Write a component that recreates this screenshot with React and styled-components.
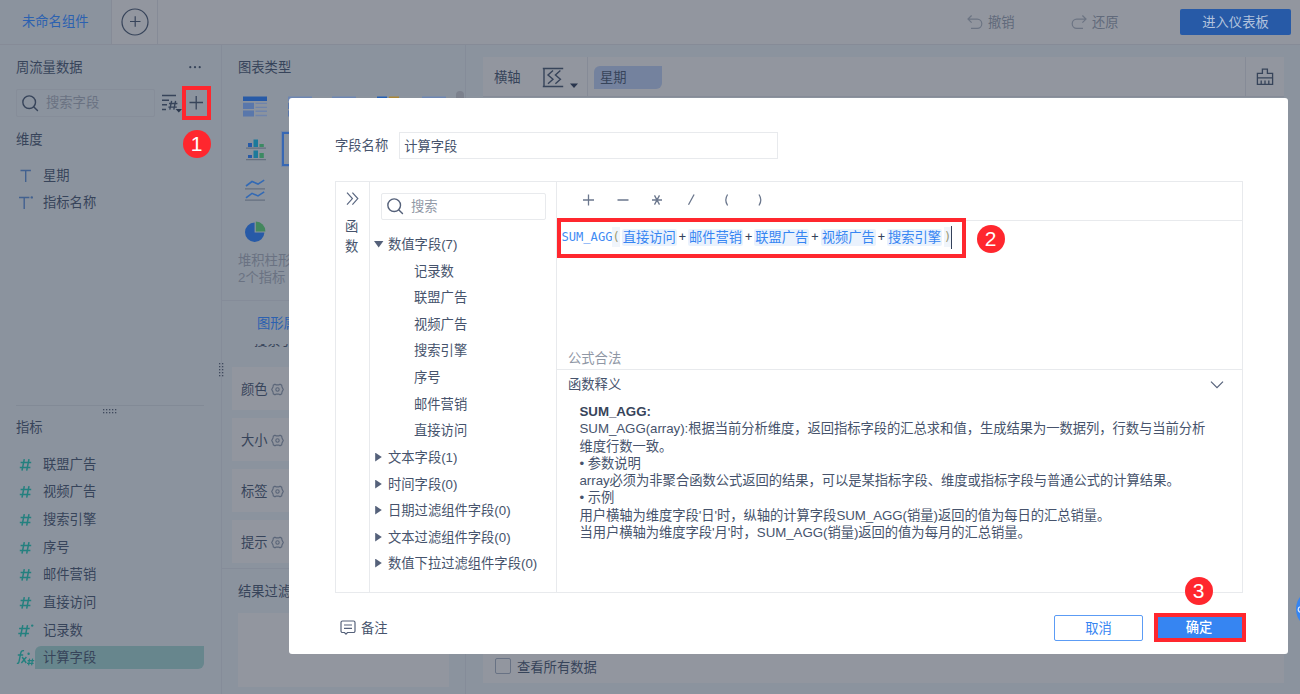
import React from "react";
import styled, { createGlobalStyle, css } from "styled-components";

const GlobalStyle = createGlobalStyle`
  * { box-sizing: border-box; }
  body {
    margin: 0;
    overflow: hidden;
    font-family: "Liberation Sans", "Noto Sans CJK SC", sans-serif;
    font-size: 13.3px;
    line-height: 20px;
    color: #37445a;
  }
  svg { display: block; flex: none; }
`;

const groups = ["文本字段(1)", "时间字段(0)", "日期过滤组件字段(0)", "文本过滤组件字段(0)", "数值下拉过滤组件字段(0)"];
const numberFields = ["记录数", "联盟广告", "视频广告", "搜索引擎", "序号", "邮件营销", "直接访问"];
const measures = ["联盟广告", "视频广告", "搜索引擎", "序号", "邮件营销", "直接访问"];
const formula = ["直接访问", "邮件营销", "联盟广告", "视频广告", "搜索引擎"];

// icons

const SearchIcon = ({ color }) => (
  <svg width="17" height="17" viewBox="0 0 18 18" fill="none" stroke={color} strokeWidth="1.5">
    <circle cx="7.6" cy="7.6" r="6.7" />
    <path d="M12.6 12.6l3.8 3.8" strokeLinecap="round" />
  </svg>
);

const HashIcon = ({ dot }) => (
  <svg width="16" height="16" viewBox="0 0 16 16" fill="none" stroke="#24807f" strokeWidth="1.5">
    <path d="M6.3 2.2L4 13.6M11 2.2L8.7 13.6M2.6 5.4h10.6M1.8 10.4h10.6" transform={dot ? "translate(-1.5 0)" : undefined} />
    {dot && <circle cx="14.2" cy="2.6" r="1.2" fill="#24807f" stroke="none" />}
  </svg>
);

const TextIcon = ({ dot }) => (
  <svg width="16" height="16" viewBox="0 0 16 16" fill="none" stroke="#42618f" strokeWidth="1.4">
    <path d="M2.5 2.5h10.400M7.700 2.500V14" transform={dot ? "translate(-1.5 0)" : undefined} />
    {dot && <circle cx="13.8" cy="2.4" r="1.2" fill="#42618f" stroke="none" />}
  </svg>
);

const FxIcon = () => (
  <svg width="19" height="18" viewBox="0 0 19 18" fill="none" stroke="#24807f" strokeWidth="1.4">
    <path d="M8 1.8C5.8 1.2 5 2.6 4.6 4.6L3 12.6C2.700 14 2 14.600 .9 14.300M1.800 6h5.400M6.200 8l4 6M10.400 8l-5 6" />
    <path d="M13.600 9.600l-1 6.800M16.600 9.600l-1 6.800M11.600 11.600h6.600M11 14.400h6.600" strokeWidth="1.200" />
    <circle cx="12.6" cy="4.800" r="1.200" fill="#24807f" stroke="none" />
  </svg>
);

const SortIcon = () => (
  <svg width="22" height="20" viewBox="0 0 22 20" fill="none" stroke="#37445a" strokeWidth="1.4">
    <path d="M1 2.500h14M1 7.200h7M1 11.800h5M1 16.500h4" />
    <path d="M10.600 7.900L8.800 16.700M14.600 7.900l-1.800 8.800M8 10.500h8.400M7.400 14.100h8.400" strokeWidth="1.4" />
    <path d="M14.600 16h6.400l-3.200 3.600z" fill="#2c384d" stroke="none" />
  </svg>
);

const HexIcon = () => (
  <svg width="13" height="13" viewBox="0 0 13 13" fill="none" stroke="#5a6578" strokeWidth="1.1">
    <path d="M4 1.2l1.1.7h2.8L9 1.2l1.7 1L11 4l1.3 2.5L11 9l-.3 1.8-1.7 1-1.1-.7H5.1l-1.1.7-1.7-1L2 9 .7 6.5 2 4l.3-1.8z" />
    <circle cx="6.5" cy="6.5" r="1.7" />
  </svg>
);

const TableChartIcon = ({ faded }) => (
  <svg width="24" height="21" viewBox="0 0 24 21">
    <path d="M0 .5h24v4.5H0z" fill={faded ? "#6d86b3" : "#275aa7"} />
    <path d="M0 6.8h11v6.2H0zM0 14.6h11v6H0z" fill="#5977ab" />
    <path d="M12.5 7.4h11.5M12.5 11.4h11.5M12.5 15.3h11.5M12.5 19.5h11.5" stroke="#6f84ab" strokeWidth="1.4" />
  </svg>
);

const MultiChartIcon = () => (
  <svg width="20" height="22" viewBox="0 0 20 22">
    <path d="M2 4h4v4H2zM2 16h4v3H2z" fill="#275aa7" />
    <path d="M7.500 .5h4.500V8H7.500zM7.500 11.5h4.500V19H7.500z" fill="#1c7a9b" />
    <path d="M13.500 5h4.300v3h-4.300zM13.500 14h4.300v5h-4.300z" fill="#3c8a63" />
    <path d="M0 9.2h20M0 20.6h20" stroke="#667080" strokeWidth="1.2" />
  </svg>
);

const LineChartIcon = () => (
  <svg width="20" height="22" viewBox="0 0 20 22" fill="none">
    <path d="M1 7l6-4.500 6 2.600 6.200-4M1 18.800l6-4.500 6 2.600 6.200-4" stroke="#336ab5" strokeWidth="1.600" />
    <path d="M0 9.800h20M0 21.200h20" stroke="#667080" strokeWidth="1.200" />
  </svg>
);

const PieChartIcon = () => (
  <svg width="22" height="22" viewBox="0 0 22 22">
    <path d="M9.600 1.600A9.700 9.700 0 1 0 19.400 11.600H9.600z" fill="#275aa7" />
    <path d="M10.800 .4A9.700 9.700 0 0 1 20.400 10.400h-9.600z" fill="#43875d" />
  </svg>
);

const BarChartIcon = () => (
  <svg width="24" height="21" viewBox="0 0 24 21">
    <path d="M0 .5h10v20H0z" fill="#235fb4" />
    <path d="M12 .5h10v20H12z" fill="#a98636" />
  </svg>
);

const DotGrid = ({ cols, rows }) => {
  const dots = [];
  for (let r = 0; r < rows; r++)
    for (let c = 0; c < cols; c++)
      dots.push(<rect key={`${r}-${c}`} x={c * 3} y={r * 3} width="1.3" height="1.3" />);
  return (
    <svg width={cols * 3} height={rows * 3} fill="#3f4a5d">
      {dots}
    </svg>
  );
};

const Group = ({ title, open }) => (
  <TreeRow>
    <svg width="10" height="10" viewBox="0 0 10 10" fill="#55617a">
      {open ? <path d="M0 1h9.400L4.700 7.600z" /> : <path d="M1.200 -.4l6.600 4.500-6.600 4.500z" />}
    </svg>
    {title}
  </TreeRow>
);

const App = () => (
  <Page>
    <GlobalStyle />
    <TopBar>
      <Tab>未命名组件</Tab>
      <AddTab>
        <svg width="28" height="28" viewBox="0 0 28 28" fill="none" stroke="#37445a" strokeWidth="1.2">
          <circle cx="14" cy="14" r="13" />
          <path d="M9 13.5h10.5M14.2 8.2v10.5" />
        </svg>
      </AddTab>
      <Actions>
        <Action>
          <svg width="16" height="16" viewBox="0 0 16 16" fill="none" stroke="#6c7483" strokeWidth="1.2">
            <path d="M4.6 .5L1 4.1l3.6 3.6M1.2 4.1h9a4.6 4.6 0 0 1 0 9.200H4" />
          </svg>
          撤销
        </Action>
        <Action>
          <svg width="16" height="16" viewBox="0 0 16 16" fill="none" stroke="#6c7483" strokeWidth="1.2">
            <path d="M11.4 .5L15 4.100l-3.600 3.600M14.800 4.100h-9a4.600 4.600 0 0 0 0 9.200H12" />
          </svg>
          还原
        </Action>
        <Enter>进入仪表板</Enter>
      </Actions>
    </TopBar>

    <Columns>
      <FieldPanel>
        <PanelHead>
          周流量数据
          <svg width="12" height="4" viewBox="0 0 12 4" fill="#37445a">
            <circle cx="1.3" cy="1.200" r="1.1" />
            <circle cx="6" cy="1.200" r="1.1" />
            <circle cx="10.7" cy="1.200" r="1.1" />
          </svg>
        </PanelHead>
        <SearchRow>
          <FieldSearch>
            <SearchIcon color="#37445a" />
            搜索字段
          </FieldSearch>
          <SortIcon />
          <AddField>
            <svg width="15" height="15" viewBox="0 0 15 15" stroke="#37445a" strokeWidth="1.3">
              <path d="M.5 6.500h13.500M7.200 0v13.500" />
            </svg>
            <Step $left="-3.5px" $top="39.5px">1</Step>
          </AddField>
        </SearchRow>
        <Dimensions>
          <GroupName>维度</GroupName>
          <DimList>
            <Field $h="26.5px"><TextIcon />星期</Field>
            <Field $h="26.5px"><TextIcon dot />指标名称</Field>
          </DimList>
        </Dimensions>
        <Measures>
          <Grip><DotGrid cols={5} rows={2} /></Grip>
          <GroupName>指标</GroupName>
          <MeasureList>
            {measures.map((m) => (
              <Field key={m} $h="27.65px"><HashIcon />{m}</Field>
            ))}
            <Field $h="27.65px"><HashIcon dot />记录数</Field>
            <CalcField><FxIcon /><CalcName>计算字段</CalcName></CalcField>
          </MeasureList>
        </Measures>
      </FieldPanel>

      <ChartPanel>
        <SideGrip><DotGrid cols={2} rows={5} /></SideGrip>
        <ChartTypes>
          <ChartTitle>图表类型</ChartTitle>
          <ChartGrid>
            <TableChartIcon /><TableChartIcon faded /><TableChartIcon faded /><BarChartIcon /><TableChartIcon faded />
            <MultiChartIcon /><Selected />
          </ChartGrid>
          <Thumb />
          <IconLine $top="19px"><LineChartIcon /></IconLine>
          <IconLine $top="20px"><PieChartIcon /></IconLine>
          <Hint>堆积柱形图<br />2个指标</Hint>
        </ChartTypes>
        <AttrTab>图形属性</AttrTab>
        <Clipped><span>搜索引擎</span></Clipped>
        <Attrs>
          {["颜色", "大小", "标签", "提示"].map((a) => (
            <Attr key={a}>{a}<HexIcon /></Attr>
          ))}
        </Attrs>
        <FilterBox>
          结果过滤器
          <FilterDrop />
        </FilterBox>
      </ChartPanel>

      <Main>
        <AxisRow>
          <AxisName>
            横轴
            <svg width="37" height="22" viewBox="0 0 37 22" fill="none" stroke="#37445a" strokeWidth="1.4">
              <path d="M.8 1.500h20.400M.8 19.500h20.400M2 1.500v18M11 3.500L6 8l5 4.200-5 4.600M18.400 3.500l-5 4.500 5 4.200-5 4.600" />
              <path d="M28 16.500h8l-4 4.400z" fill="#29354d" stroke="none" />
            </svg>
          </AxisName>
          <AxisFields><AxisChip>星期</AxisChip></AxisFields>
          <Clean>
            <svg width="18" height="18" viewBox="0 0 18 18" fill="none" stroke="#37445a" strokeWidth="1.3">
              <path d="M6.4 5.4V1.200h5v4.200h5.200v4.400H1.400V5.400zM1.400 9.800v6.600h15.200V9.800M5.200 12.600v3.600M9 12.600v3.600M12.800 12.600v3.600" />
            </svg>
          </Clean>
        </AxisRow>
        <Preview>
          <Checkbox />
          查看所有数据
        </Preview>
      </Main>
    </Columns>

    <Helper>
      <svg width="40" height="40" viewBox="0 0 40 40" fill="none" stroke="#dbe8fb" strokeWidth="1.3">
        <circle cx="5" cy="20.5" r="2.8" />
      </svg>
    </Helper>

    <Dialog>
      <NameRow>
        字段名称
        <NameInput>计算字段</NameInput>
      </NameRow>
      <Editor>
        <FnBar>
          <svg width="13" height="14" viewBox="0 0 13 14" fill="none" stroke="#5a6781" strokeWidth="1.2">
            <path d="M1 .6l5.400 6L1 12.600M6.400 .6l5.400 6-5.400 6" />
          </svg>
          <FnLabel>函数</FnLabel>
        </FnBar>
        <FieldTree>
          <TreeSearch>
            <SearchIcon color="#55617a" />
            搜索
          </TreeSearch>
          <Group title="数值字段(7)" open />
          {numberFields.map((f) => (
            <Leaf key={f}>{f}</Leaf>
          ))}
          {groups.map((g) => (
            <Group key={g} title={g} />
          ))}
        </FieldTree>
        <Formula>
          <Operators>
            <svg width="186" height="18" viewBox="0 0 186 18" fill="none" stroke="#6b778d" strokeWidth="1.3">
              <path d="M2 9h11M7.5 3.5v11M36.500 9h11M71 9h10M73.500 4.400l5 9.200M78.500 4.400l-5 9.200M107.500 13.800l5.600-10.300M146.600 3.500q-3.600 5.500 0 11M178 3.500q3.600 5.500 0 11" />
            </svg>
          </Operators>
          <Code>
            <CodeLine>
              <Fn>SUM_AGG</Fn>
              <Paren>(</Paren>
              {formula.map((f, i) => (
                <React.Fragment key={f}>
                  {i > 0 && <Plus>+</Plus>}
                  <Chip>{f}</Chip>
                </React.Fragment>
              ))}
              <Paren>)</Paren>
              <Cursor />
            </CodeLine>
            <Outline />
            <Step $left="419.5px" $top="3.5px">2</Step>
            <Status>公式合法</Status>
          </Code>
          <DocHead>
            函数释义
            <svg width="14" height="8" viewBox="0 0 14 8" fill="none" stroke="#55617a" strokeWidth="1.2">
              <path d="M1 .6l6 6 6-6" />
            </svg>
          </DocHead>
          <Doc>
            <b>SUM_AGG:</b>
            <p>SUM_AGG(array):根据当前分析维度，返回指标字段的汇总求和值，生成结果为一数据列，行数与当前分析</p>
            <p>维度行数一致。</p>
            <p>• 参数说明</p>
            <p>array必须为非聚合函数公式返回的结果，可以是某指标字段、维度或指标字段与普通公式的计算结果。</p>
            <p>• 示例</p>
            <p>用户横轴为维度字段'日'时，纵轴的计算字段SUM_AGG(销量)返回的值为每日的汇总销量。</p>
            <p>当用户横轴为维度字段'月'时，SUM_AGG(销量)返回的值为每月的汇总销量。</p>
          </Doc>
        </Formula>
      </Editor>
      <Footer>
        <svg width="16" height="16" viewBox="0 0 16 16" fill="none" stroke="#55617a" strokeWidth="1.2">
          <path d="M2.500 1h11a1.500 1.500 0 0 1 1.500 1.500v8.500a1.500 1.500 0 0 1-1.500 1.500H7.500L6 14.200l-1.500-1.700h-2A1.500 1.500 0 0 1 1 11V2.500A1.500 1.500 0 0 1 2.500 1zM4 5h8M4 8.300h8" />
        </svg>
        <Note>备注</Note>
        <Cancel>取消</Cancel>
        <Confirm>
          <Step $left="26.5px" $top="-40.5px">3</Step>
          确定
        </Confirm>
      </Footer>
    </Dialog>
  </Page>
);
export default App;

const Page = styled.div`
  position: relative;
  display: flex;
  flex-direction: column;
  width: 1300px;
  height: 694px;
  overflow: hidden;
  background: #8b939e;
`

// top bar

const TopBar = styled.div`
  display: flex;
  height: 45px;
  flex: none;
  background: #92969f;
  border-bottom: 1px solid #868b97;
`
const Tab = styled.div`
  width: 112px;
  padding-left: 22px;
  line-height: 44px;
  color: #2c61b0;
  background: #8b939e;
  border-right: 1px solid #868b97;
`
const AddTab = styled.div`
  display: flex;
  align-items: center;
  justify-content: center;
  width: 46px;
  border-right: 1px solid #868b97;
`
const Actions = styled.div`
  display: flex;
  align-items: center;
  margin-left: auto;
  padding: 0 9px 0 0;
`
const Action = styled.div`
  display: flex;
  align-items: center;
  gap: 5px;
  width: 104px;
  padding-top: 1px;
  color: #616a7b;
`
const Enter = styled.div`
  width: 111px;
  height: 26px;
  margin-left: 5px;
  line-height: 27px;
  text-align: center;
  color: #b3c3dd;
  background: #275aa7;
  border-radius: 2px;
`

const Columns = styled.div`
  display: flex;
  flex: 1;
  min-height: 0;
`

// fields

const FieldPanel = styled.div`
  display: flex;
  flex-direction: column;
  width: 222px;
  padding: 12px 17px 0 16px;
  border-right: 1px solid #858c99;
`
const PanelHead = styled.div`
  display: flex;
  align-items: center;
  justify-content: space-between;
  height: 20px;
  padding: 2px 3px 0 0;
`
const SearchRow = styled.div`
  display: flex;
  align-items: center;
  height: 34px;
  margin-top: 9px;
`
const FieldSearch = styled.div`
  display: flex;
  align-items: center;
  gap: 7px;
  width: 139px;
  height: 28px;
  margin-right: 6px;
  padding-left: 5px;
  color: #6a7282;
  border: 1px solid #868d99;
  border-radius: 2px;
`
const AddField = styled.div`
  position: relative;
  display: flex;
  align-items: center;
  justify-content: center;
  width: 29px;
  height: 34px;
  margin: 0 -9px 0 -1px;
  flex: none;
  border: 4px solid #ff272e;
`
const Step = styled.div`
  position: absolute;
  left: ${p => p.$left};
  top: ${p => p.$top};
  width: 28px;
  height: 28px;
  line-height: 28px;
  border-radius: 50%;
  text-align: center;
  font-size: 21px;
  color: #fff;
  background: #ff272e;
`
const Dimensions = styled.div`
  flex: none;
  height: 286px;
  width: 188px;
  padding-top: 10px;
  border-bottom: 1px solid #828a96;
`
const GroupName = styled.div`
  height: 20px;
`
const DimList = styled.div`
  padding-top: 13px;
`
const Field = styled.div`
  display: flex;
  align-items: center;
  gap: 9px;
  height: ${p => p.$h};
  padding-left: 2px;
`
const Measures = styled.div`
  flex: 1;
`
const Grip = styled.div`
  display: flex;
  justify-content: center;
  height: 12px;
  padding: 3px 0 0 0;
`
const MeasureList = styled.div`
  padding-top: 13px;
`
const CalcField = styled.div`
  display: flex;
  align-items: center;
  height: 27px;
`
const CalcName = styled.div`
  width: 169px;
  height: 23px;
  padding-left: 8px;
  line-height: 23px;
  flex: none;
  background: #67868d;
  border-radius: 6px 0 6px 0;
`

// chart types and attributes

const ChartPanel = styled.div`
  position: relative;
  width: 244px;
  display: flex;
  flex-direction: column;
  border-right: 1px solid #858c99;
`
const SideGrip = styled.div`
  position: absolute;
  left: -3px;
  top: 318px;
`
const ChartTypes = styled.div`
  position: relative;
  height: 256px;
  padding: 12px 0 0 21px;
  border-bottom: 1px solid #858c99;
`
const ChartTitle = styled.div`
  height: 20px;
  padding-top: 1px;
  margin-left: -5px;
`
const ChartGrid = styled.div`
  display: grid;
  grid-template-columns: repeat(5, 44.7px);
  grid-template-rows: 34px 34px;
  row-gap: 2px;
  padding-top: 13px;
  align-items: center;
  svg:nth-of-type(6) { margin: 13px 0 0 3px; }
  svg:nth-of-type(-n+5) { margin-top: -1px; }
`
const Selected = styled.div`
  width: 36px;
  height: 34px;
  margin: 11px 0 0 -6px;
  border: 2px solid #3868b4;
  box-shadow: 0 0 0 1px #7889a6;
`
const Thumb = styled.div`
  position: absolute;
  right: 1px;
  top: 46px;
  width: 8px;
  height: 60px;
  border-radius: 4px;
  background: #7c818d;
`
const IconLine = styled.div`
  display: flex;
  height: 22px;
  margin: ${p => p.$top} 0 0 2px;
`
const Hint = styled.div`
  margin: 9px 0 0 -5px;
  line-height: 17.3px;
  color: #6a7282;
`
const AttrTab = styled.div`
  height: 43px;
  padding-left: 35px;
  line-height: 45px;
  color: #2c61b0;
`
const Clipped = styled.div`
  display: flex;
  align-items: flex-end;
  height: 4px;
  margin-bottom: 19px;
  padding-left: 32px;
  overflow: hidden;
  line-height: 14px;
`
const Attrs = styled.div`
  display: flex;
  flex-direction: column;
  gap: 8px;
  height: 201px;
  padding: 0 16px 0 10px;
`
const Attr = styled.div`
  display: flex;
  align-items: center;
  gap: 3px;
  height: 43px;
  padding: 2px 0 0 9px;
  background: #92969f;
`
const FilterBox = styled.div`
  flex: 1;
  padding: 13px 16px 7px;
  border-top: 1px solid #858c99;
`
const FilterDrop = styled.div`
  height: 74px;
  margin-top: 11px;
  background: #92969f;
`

// chart area

const Main = styled.div`
  display: flex;
  flex-direction: column;
  flex: 1;
  padding: 12px 16px 11px 17px;
`
const AxisRow = styled.div`
  display: flex;
  height: 40px;
  background: #92969f;
  border-bottom: 1px solid #868b97;
`
const AxisName = styled.div`
  display: flex;
  align-items: center;
  gap: 21px;
  width: 105px;
  padding-left: 11px;
  padding-top: 3px;
  border-right: 1px solid #868b97;
`
const AxisFields = styled.div`
  flex: 1;
  padding: 9px 6px;
`
const AxisChip = styled.div`
  width: 68px;
  height: 23px;
  padding-left: 6px;
  line-height: 23px;
  background: #74829e;
  border-radius: 6px 0 6px 0;
`
const Clean = styled.div`
  display: flex;
  align-items: center;
  justify-content: center;
  width: 39px;
  padding-top: 1px;
  border-left: 1px solid #868b97;
`
const Preview = styled.div`
  display: flex;
  flex: 1;
  align-items: flex-end;
  gap: 6px;
  margin-top: 8px;
  padding: 0 0 5px 12px;
  background: #92969f;
`
const Checkbox = styled.div`
  width: 16px;
  height: 16px;
  margin-bottom: 4px;
  border: 1px solid #687284;
  border-radius: 2px;
`
const Helper = styled.div`
  position: absolute;
  left: 1296px;
  top: 589px;
  width: 40px;
  height: 40px;
  border-radius: 50%;
  background: #3685f2;
`

// dialog

const line = css`1px solid #e8eaed`

const Dialog = styled.div`
  position: absolute;
  left: 289px;
  top: 98px;
  width: 999px;
  height: 556px;
  padding: 34px 45px 0 46px;
  background: #fff;
  border-radius: 3px;
  color: #46536c;
`
const NameRow = styled.div`
  display: flex;
  align-items: center;
  gap: 11px;
  height: 27px;
  line-height: 22px;
`
const NameInput = styled.div`
  width: 379px;
  height: 27px;
  padding-left: 4px;
  line-height: 27px;
  border: ${line};
`
const Editor = styled.div`
  display: flex;
  height: 412px;
  margin-top: 22px;
  border: ${line};
`
const FnBar = styled.div`
  display: flex;
  flex-direction: column;
  align-items: center;
  width: 34px;
  padding-top: 10px;
  border-right: ${line};
`
const FnLabel = styled.div`
  width: 14px;
  margin: 11px 1px 0 0;
  line-height: 19.5px;
`
const FieldTree = styled.div`
  width: 187px;
  flex: none;
  border-right: ${line};
`
const TreeSearch = styled.div`
  display: flex;
  align-items: center;
  gap: 7px;
  height: 27px;
  width: 165px;
  margin: 11px 0 12px 11px;
  padding-left: 5px;
  color: #8f97a5;
  border: ${line};
  border-radius: 2px;
`
const TreeRow = styled.div`
  display: flex;
  align-items: center;
  gap: 4px;
  height: 26.6px;
  padding-left: 4px;
`
const Leaf = styled.div`
  height: 26.6px;
  padding-left: 44px;
  line-height: 26.6px;
`
const Formula = styled.div`
  display: flex;
  flex-direction: column;
  flex: 1;
`
const Operators = styled.div`
  height: 39px;
  padding: 9px 24px;
  border-bottom: ${line};
`
const Code = styled.div`
  position: relative;
  height: 149px;
  border-bottom: ${line};
`
const CodeLine = styled.div`
  display: flex;
  align-items: center;
  height: 32px;
  padding-left: 4.5px;
  font-family: "DejaVu Sans Mono", "Noto Sans CJK SC", monospace;
  font-size: 12.1px;
`
const Fn = styled.span`
  color: #3f8bf3;
`
const Paren = styled.span`
  color: #9b9a75;
  background: #f0f5fb;
`
const Plus = styled.span`
  color: #34415a;
`
const Chip = styled.span`
  height: 17px;
  margin: 0 2px;
  padding: 0 1px;
  line-height: 17px;
  font-size: 13.25px;
  color: #3685f2;
  background: #eaf2fd;
  border-radius: 2px;
`
const Cursor = styled.span`
  width: 1px;
  height: 23px;
  background: #34415a;
`
const Outline = styled.div`
  position: absolute;
  left: 0;
  top: -3px;
  width: 409px;
  height: 40px;
  border: 4px solid #ff272e;
`
const Status = styled.div`
  margin-top: 96px;
  padding-left: 11px;
  color: #8f97a5;
`
const DocHead = styled.div`
  display: flex;
  align-items: center;
  justify-content: space-between;
  height: 29px;
  padding: 0 18px 0 11px;
`
const Doc = styled.div`
  padding: 4px 0 0 22.5px;
  line-height: 17.3px;
  letter-spacing: -0.04px;
  white-space: nowrap;
  b { display: block; color: #37445a; }
  p { margin: 0; }
`
const Footer = styled.div`
  display: flex;
  align-items: center;
  height: 29px;
  margin-top: 20px;
  padding-left: 5px;
`
const Note = styled.div`
  margin: 3px auto 0 5px;
`
const Cancel = styled.div`
  width: 89px;
  height: 26px;
  margin-top: 1px;
  line-height: 25px;
  text-align: center;
  color: #3685f2;
  border: 1px solid #5c9cf5;
  border-radius: 2px;
`
const Confirm = styled.div`
  position: relative;
  width: 92px;
  height: 29px;
  margin: 0 -3px 0 11px;
  padding-right: 2px;
  line-height: 22px;
  text-align: center;
  color: #fff;
  background: #3685f2;
  border: 4px solid #ff272e;
  font-weight: 500;
`
